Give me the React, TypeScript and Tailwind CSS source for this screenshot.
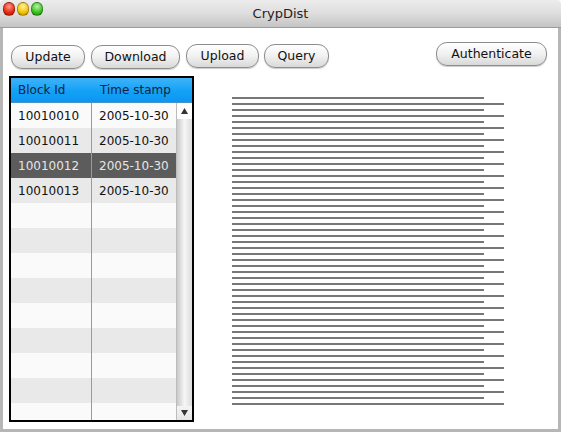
import React from 'react'

const font = { fontFamily: '"DejaVu Sans", "Liberation Sans", sans-serif' }

const rows = [
  { id: '10010010', ts: '2005-10-30' },
  { id: '10010011', ts: '2005-10-30' },
  { id: '10010012', ts: '2005-10-30' },
  { id: '10010013', ts: '2005-10-30' },
]

function AquaButton({ label, width, className = '' }: { label: string; width: string; className?: string }) {
  return (
    <button
      className={`${width} ${className} h-[24px] rounded-[11px] border border-[#8c8c8c] bg-gradient-to-b from-[#ffffff] via-[#f1f1f1] to-[#d9d9d9] text-[12.5px] text-[#111] shadow-[0_1px_1px_rgba(0,0,0,0.2)] flex items-center justify-center`}
    >
      {label}
    </button>
  )
}

function Light({ color }: { color: string }) {
  return <div className={`w-[12px] h-[14px] rounded-full border border-[rgba(0,0,0,0.3)] ${color}`} />
}

export default function App() {
  const bodyRows = Array.from({ length: 13 }, (_, i) => rows[i] ?? null)
  const lines = Array.from({ length: 52 }, (_, i) => i)

  return (
    <div className="w-[562px] h-[434px] bg-white" style={font}>
      <div className="w-[561px] h-[432px] flex flex-col">
        {/* title bar */}
        <div className="relative h-[28px] bg-gradient-to-b from-[#ececec] via-[#dedede] to-[#c4c4c4] border-b border-[#9c9c9c] rounded-t-[4px] flex items-center justify-center">
          <div className="absolute left-[3px] top-[2px] flex gap-[2px]">
            <Light color="bg-[radial-gradient(circle_at_50%_30%,#ff9a8a,#e52a10_60%,#b01800)]" />
            <Light color="bg-[radial-gradient(circle_at_50%_30%,#fff2a0,#f2c400_60%,#c08a00)]" />
            <Light color="bg-[radial-gradient(circle_at_50%_30%,#b6f5a0,#3cc020_60%,#1e8a10)]" />
          </div>
          <span className="text-[13px] text-[#222]">CrypDist</span>
        </div>

        {/* window body */}
        <div className="flex-1 border-l-[3px] border-r-[3px] border-b-[3px] border-[#b6b6b6] flex flex-col">
          <div className="flex items-start pt-[14px] pl-[8px] pr-[11px]">
            <AquaButton label="Update" width="w-[74px]" className="mt-[3px]" />
            <AquaButton label="Download" width="w-[89px]" className="ml-[6px] mt-[3px]" />
            <AquaButton label="Upload" width="w-[73px]" className="ml-[6px] mt-[2px]" />
            <AquaButton label="Query" width="w-[65px]" className="ml-[5px] mt-[2px]" />
            <AquaButton label="Authenticate" width="w-[111px]" className="ml-auto" />
          </div>

          <div className="flex mt-[7px] pl-[6px]">
            {/* table */}
            <div className="w-[185px] h-[346px] border-2 border-black flex flex-col overflow-hidden">
              <div className="h-[25px] shrink-0 flex bg-gradient-to-b from-[#3db3f8] via-[#14a3f6] to-[#0a96f2] border-b border-[#4a90c8] text-[12px] text-[#14233a]">
                <div className="w-[82px] pl-[7px] flex items-center">Block Id</div>
                <div className="flex-1 pl-[7px] flex items-center">Time stamp</div>
              </div>
              <div className="flex flex-1 min-h-0">
                <div className="w-[165px] flex flex-col overflow-hidden">
                  {bodyRows.map((r, i) => {
                    const selected = i === 2
                    const bg = selected ? 'bg-[#5c5c5c] text-[#e6e6e6]' : i % 2 === 0 ? 'bg-[#fafafa] text-[#111]' : 'bg-[#e9e9e9] text-[#111]'
                    return (
                      <div key={i} className={`h-[25px] shrink-0 flex text-[12px] ${bg}`}>
                        <div className="w-[81px] pl-[7px] flex items-center border-r border-[#9a9a9a]">{r?.id}</div>
                        <div className="flex-1 pl-[7px] flex items-center">{r?.ts}</div>
                      </div>
                    )
                  })}
                </div>
                {/* scrollbar */}
                <div className="flex-1 flex flex-col justify-between bg-gradient-to-r from-[#c8c8c8] via-[#f6f6f6] to-[#dcdcdc] border-l border-[#bcbcbc]">
                  <div className="h-[16px] bg-white flex items-center justify-center">
                    <svg width="7" height="6" viewBox="0 0 7 6">
                      <path d="M3.5 0 L7 6 L0 6 Z" fill="#333" />
                    </svg>
                  </div>
                  <div className="h-[14px] bg-gradient-to-b from-[#f4f4f4] to-[#e4e4e4] flex items-center justify-center">
                    <svg width="7" height="6" viewBox="0 0 7 6">
                      <path d="M0 0 L7 0 L3.5 6 Z" fill="#333" />
                    </svg>
                  </div>
                </div>
              </div>
            </div>

            {/* striped panel */}
            <div className="ml-[38px] mt-[21px] flex flex-col gap-[4px]">
              {lines.map((i) => (
                <div key={i} className={`h-[2px] bg-[#777777] ${i % 2 === 0 ? 'w-[252px]' : 'w-[272px]'}`} />
              ))}
            </div>
          </div>
        </div>
      </div>
    </div>
  )
}
